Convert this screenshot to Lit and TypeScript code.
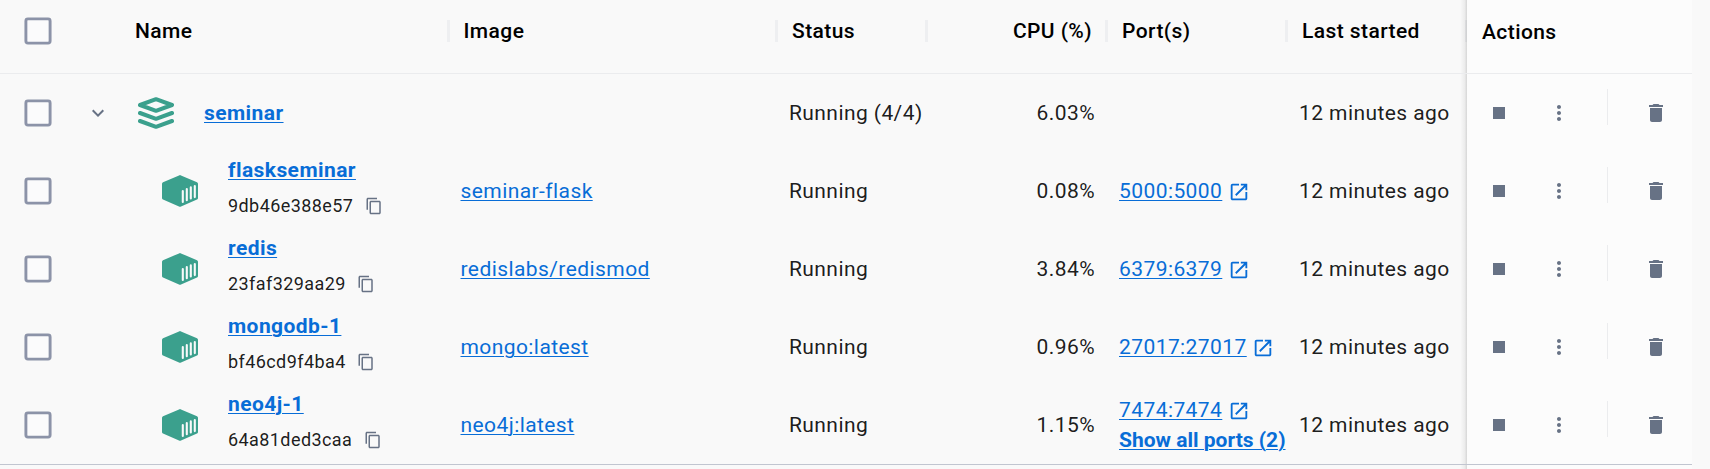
import { LitElement, html, css, svg, nothing } from "lit";
import { customElement } from "lit/decorators.js";

interface Container {
  name: string;
  id: string;
  image: string;
  cpu: string;
  port: string;
  more?: string;
}

const containers: Container[] = [
  { name: "flaskseminar", id: "9db46e388e57", image: "seminar-flask", cpu: "0.08%", port: "5000:5000" },
  { name: "redis", id: "23faf329aa29", image: "redislabs/redismod", cpu: "3.84%", port: "6379:6379" },
  { name: "mongodb-1", id: "bf46cd9f4ba4", image: "mongo:latest", cpu: "0.96%", port: "27017:27017" },
  { name: "neo4j-1", id: "64a81ded3caa", image: "neo4j:latest", cpu: "1.15%", port: "7474:7474", more: "Show all ports (2)" },
];

const icon = (cls: string, size: number, d: string) => html`
  <svg class=${cls} width=${size} height=${size} viewBox="0 0 24 24">${svg`<path d=${d} fill="currentColor"/>`}</svg>`;

const chevron = icon("chev", 24, "M16.59 8.59 12 13.17 7.41 8.59 6 10l6 6 6-6z");
const copyIcon = icon("copy", 18, "M16 1H4c-1.1 0-2 .9-2 2v14h2V3h12V1zm3 4H8c-1.1 0-2 .9-2 2v14c0 1.1.9 2 2 2h11c1.1 0 2-.9 2-2V7c0-1.1-.9-2-2-2zm0 16H8V7h11v14z");
const openIcon = icon("open", 22, "M19 19H5V5h7V3H5c-1.11 0-2 .9-2 2v14c0 1.1.89 2 2 2h14c1.1 0 2-.9 2-2v-7h-2v7zM14 3v2h3.59l-9.83 9.83 1.41 1.41L19 6.41V10h2V3h-7z");
const stopIcon = icon("act", 24, "M6 6h12v12H6z");
const moreIcon = icon("act", 24, "M12 8c1.1 0 2-.9 2-2s-.9-2-2-2-2 .9-2 2 .9 2 2 2zm0 2c-1.1 0-2 .9-2 2s.9 2 2 2 2-.9 2-2-.9-2-2-2zm0 6c-1.1 0-2 .9-2 2s.9 2 2 2 2-.9 2-2-.9-2-2-2z");
const trashIcon = icon("act", 24, "M6 19c0 1.1.9 2 2 2h8c1.1 0 2-.9 2-2V7H6v12zM19 4h-3.5l-1-1h-5l-1 1H5v2h14V4z");

const checkbox = html`
  <svg width="28" height="28" viewBox="0 0 28 28">
    <rect x="1.900" y="1.900" width="24.200" height="24.200" rx="2" fill="#fbfbfc" stroke="#8c93a8" stroke-width="2.900"/>
  </svg>`;

const stackIcon = html`
  <svg class="green" width="36" height="32" viewBox="0 0 36 32" fill="none" stroke="currentColor" stroke-width="4" stroke-linejoin="round" stroke-linecap="round">
    <path d="M18 2.200 34 8 18 13.800 2 8z"/><path d="M2 16l16 5.800L34 16"/><path d="M2 24l16 5.800L34 24"/>
  </svg>`;

const boxIcon = html`
  <svg class="green" width="36" height="32" viewBox="0 0 36 32">
    <path d="M17 .4q1-.6 2 0L35 7.200q1 .5 1 1.600V23q0 1-1 1.500L19 31.600q-1 .5-2 0L1 24.500Q0 24 0 23V8.800Q0 7.700 1 7.200z" fill="currentColor"/>
    <path d="M20.800 16v10.900M24.800 14v11.300M28.800 12.400v11.100M32.800 11v11.100" stroke="#f9f9fa" stroke-width="2.100" stroke-linecap="round"/>
  </svg>`;

@customElement("app-root")
export class AppRoot extends LitElement {
  static styles = css`
    :host {
      display: block;
      height: 469px;
      overflow: hidden;
      background: #f9f9f9;
      color: rgba(0, 0, 0, 0.9);
      font: 400 21px/30px Roboto, sans-serif;
      letter-spacing: 0.42px;
    }
    .table { width: 1692px; height: 469px; display: flex; flex-direction: column; }
    .row {
      display: grid;
      grid-template-columns: 75px 47px 326.5px 328.5px 150px 180px 180px 180px 225px;
      height: 78px;
      flex: none;
    }
    .head { height: 73px; color: #000; font-weight: 500; border-bottom: 1px solid #ebecee; }
    .rest { height: 4px; border-top: 1px solid #c1c5d0; }
    .cell { display: flex; align-items: center; min-width: 0; padding-left: 12px; white-space: nowrap; box-sizing: border-box; }
    .head .cell { padding-left: 15px; padding-bottom: 11px; justify-content: space-between; }
    .head .name { padding-left: 13px; }
    .head .sep::after { content: ""; width: 3px; height: 22px; background: #eeeff1; margin-right: -1px; }
    .head .name::after { margin-right: -1.5px; }
    .head .num { justify-content: flex-end; }
    .head .num::after { margin-left: 13px; }
    .num { justify-content: flex-end; padding-right: 12px; }
    .head .num { padding-right: 0; }
    .row .check { padding-left: 24px; }
    .head .check { justify-content: flex-start; }
    .toggle { padding-left: 11px; }
    svg { display: block; flex: none; }
    .chev, .copy, .act { color: #677285; }
    .green { color: #3ba08d; }
    a { color: #086dd7; text-decoration: underline; text-decoration-thickness: 1px; text-underline-offset: 2px; }
    .strong { font-weight: 700; }
    .more { letter-spacing: 0; }
    .group { padding-left: 16px; gap: 30px; }
    .child { padding-left: 40px; gap: 30px; }
    .label { display: flex; flex-direction: column; gap: 6px; padding-bottom: 6px; }
    .idline { display: flex; align-items: center; font-size: 18px; gap: 11.5px; }
    .ports { display: flex; flex-direction: column; }
    .portline { display: flex; align-items: center; gap: 5.5px; }
    .open { color: #086dd7; margin-top: 2px; }
    .actions { position: relative; background: #fcfcfc; padding-left: 20px; }
    .actions::before {
      content: "";
      position: absolute;
      top: 0;
      bottom: 0;
      right: 100%;
      width: 7px;
      background: linear-gradient(to left, rgba(0, 0, 0, 0.14), rgba(0, 0, 0, 0.05) 35%, rgba(0, 0, 0, 0));
    }
    .head .actions { padding-bottom: 9px; }
    .divider { width: 1px; height: 36px; background: #ebecee; margin: 0 36px 12px; }
    .gap { width: 36px; }
  `;

  private actions() {
    return html`<div class="cell actions">${stopIcon}<span class="gap"></span>${moreIcon}<span class="divider"></span>${trashIcon}</div>`;
  }

  private containerRow(c: Container) {
    return html`
      <div class="row">
        <div class="cell check">${checkbox}</div>
        <div class="cell"></div>
        <div class="cell child">
          ${boxIcon}
          <div class="label">
            <div><a class="strong">${c.name}</a></div>
            <div class="idline"><span>${c.id}</span>${copyIcon}</div>
          </div>
        </div>
        <div class="cell"><a>${c.image}</a></div>
        <div class="cell">Running</div>
        <div class="cell num">${c.cpu}</div>
        <div class="cell">
          <div class="ports">
            <div class="portline"><a>${c.port}</a>${openIcon}</div>
            ${c.more ? html`<a class="strong more">${c.more}</a>` : nothing}
          </div>
        </div>
        <div class="cell">12 minutes ago</div>
        ${this.actions()}
      </div>`;
  }

  render() {
    return html`
      <div class="table">
        <div class="row head">
          <div class="cell check">${checkbox}</div>
          <div class="cell"></div>
          <div class="cell name sep">Name</div>
          <div class="cell sep">Image</div>
          <div class="cell sep">Status</div>
          <div class="cell sep num">CPU (%)</div>
          <div class="cell sep">Port(s)</div>
          <div class="cell sep">Last started</div>
          <div class="cell actions">Actions</div>
        </div>
        <div class="row">
          <div class="cell check">${checkbox}</div>
          <div class="cell toggle">${chevron}</div>
          <div class="cell group">${stackIcon}<a class="strong">seminar</a></div>
          <div class="cell"></div>
          <div class="cell">Running (4/4)</div>
          <div class="cell num">6.03%</div>
          <div class="cell"></div>
          <div class="cell">12 minutes ago</div>
          ${this.actions()}
        </div>
        ${containers.map((c) => this.containerRow(c))}
        <div class="row rest">
          <div></div><div></div><div></div><div></div><div></div><div></div><div></div><div></div>
          <div class="cell actions"></div>
        </div>
      </div>`;
  }
}
